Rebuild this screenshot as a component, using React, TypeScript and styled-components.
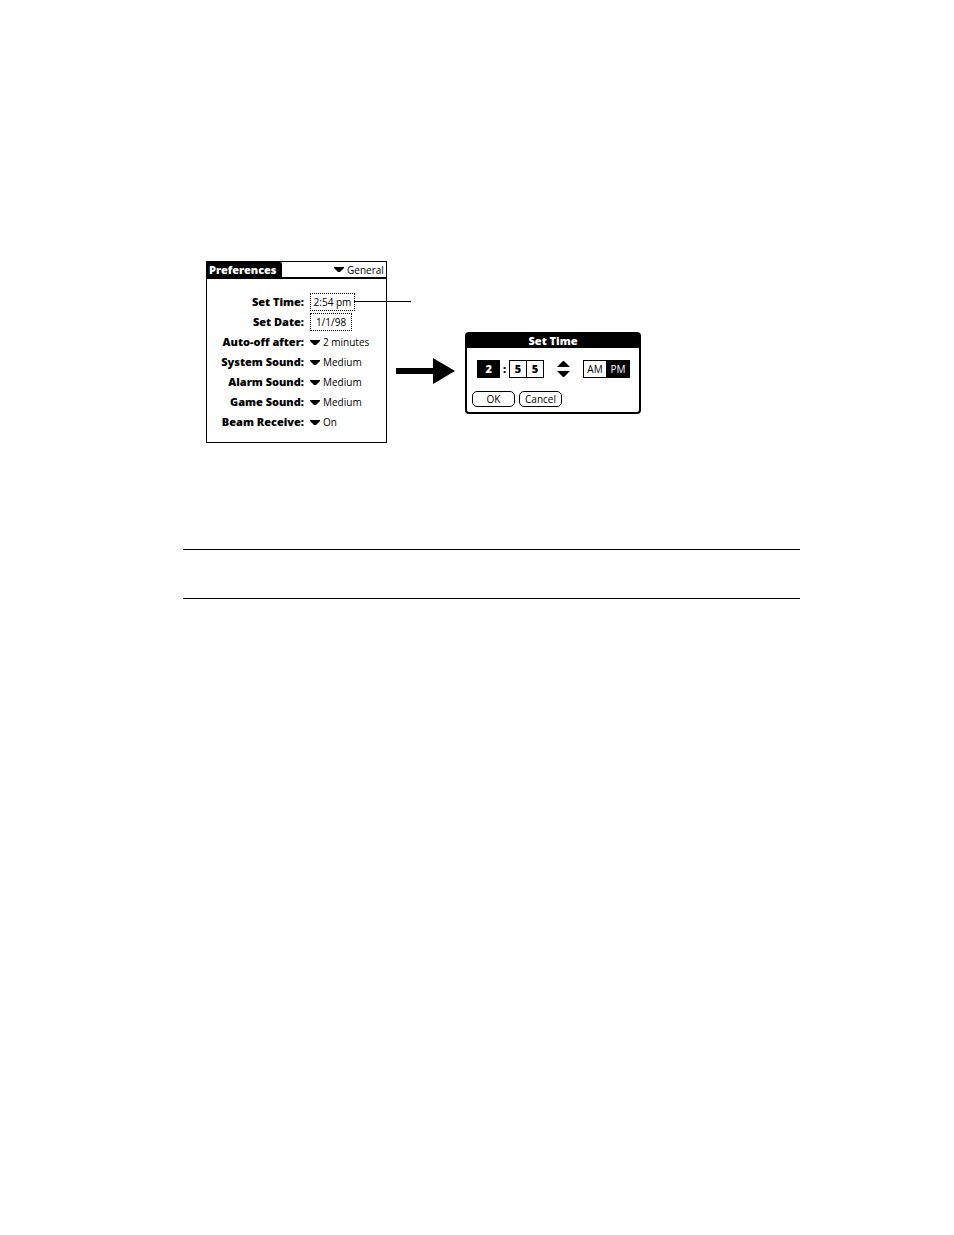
import React, { useState } from "react";
import styled, { createGlobalStyle, css } from "styled-components";

const GlobalStyle = createGlobalStyle`
  *, *::before, *::after { box-sizing: border-box; }
  body { margin: 0; background: #fff; color: #000; font-family: "Noto Sans", sans-serif; }
  button, select { margin: 0; padding: 0; font: inherit; color: inherit; background: none; border: 0; border-radius: 0; }
`;

const regularText = css`
  font: 400 10px/16px "Open Sans", sans-serif;
`;
const boldText = css`
  font: 900 11px/16px "Noto Sans", sans-serif;
`;

const Page = styled.main`
  padding: 261px 154px 0 183px;
`;
const Figure = styled.section`
  display: flex;
  align-items: flex-start;
  padding-left: 23px;
`;
const Panel = styled.form`
  display: flex;
  flex-direction: column;
  flex: none;
  width: 181px;
  min-height: 182px;
  border: 1px solid #000;
`;
const PanelHeader = styled.header`
  display: flex;
  justify-content: space-between;
  height: 17px;
  border-bottom: 2px solid #000;
`;
const PanelTitle = styled.h1`
  ${boldText}
  margin: 0;
  width: 75px;
  padding-left: 2px;
  background: #000;
  color: #fff;
  border-top-right-radius: 2px;
  white-space: nowrap;
`;
const Rows = styled.div`
  padding: 13px 0 8px;
`;
const Row = styled.div`
  display: grid;
  grid-template-columns: 97px 1fr;
  column-gap: 6px;
  align-items: center;
  height: 20px;
`;
const RowLabel = styled.label`
  ${boldText}
  text-align: right;
  white-space: nowrap;
`;
const Picker = styled.span`
  display: flex;
  align-items: center;
  gap: 3px;
`;
const PickerSelect = styled.select<{ $width: number }>`
  ${regularText}
  appearance: none;
  width: ${(p) => p.$width}px;
  height: 16px;
`;
const Trigger = styled.button<{ $width: number }>`
  ${regularText}
  position: relative;
  justify-self: start;
  width: ${(p) => p.$width}px;
  height: 18px;
  border: 1px dotted #000;
  white-space: nowrap;
`;
const Callout = styled.span`
  position: absolute;
  left: 100%;
  top: 7px;
  width: 57px;
  height: 1px;
  background: #000;
`;
const ArrowDrawing = styled.svg`
  flex: none;
  margin: 97px 10px 0 9px;
`;
const Dialog = styled.section`
  flex: none;
  width: 176px;
  margin-top: 71px;
  border: 2px solid #000;
  border-radius: 4px;
`;
const DialogTitle = styled.h2`
  ${boldText}
  margin: 0;
  height: 14px;
  line-height: 13px;
  background: #000;
  color: #fff;
  text-align: center;
`;
const TimeRow = styled.div`
  display: flex;
  align-items: center;
  padding: 12px 9px 0 10px;
`;
const Cell = styled.button<{ $on?: boolean; $bold?: boolean; $width: number }>`
  ${(p) => (p.$bold ? boldText : regularText)}
  width: ${(p) => p.$width}px;
  height: 18px;
  border: 1px solid #000;
  background: ${(p) => (p.$on ? "#000" : "#fff")};
  color: ${(p) => (p.$on ? "#fff" : "#000")};
`;
const Digits = styled.div`
  display: flex;
  ${Cell} + ${Cell} { margin-left: -1px; }
`;
const Colon = styled.span`
  ${boldText}
  width: 9px;
  text-align: center;
`;
const Spinner = styled.div`
  display: flex;
  flex-direction: column;
  gap: 4px;
  margin: 0 13px;
`;
const SpinButton = styled.button`
  display: block;
  width: 13px;
  height: 6px;
  line-height: 0;
`;
const Actions = styled.div`
  display: flex;
  gap: 4px;
  padding: 13px 5px 5px;
`;
const ActionButton = styled.button`
  ${regularText}
  width: 43px;
  height: 16px;
  line-height: 14px;
  border: 1px solid #000;
  border-radius: 5px;
`;
const Note = styled.section`
  height: 50px;
  margin-top: 106px;
  border: solid #000;
  border-width: 1px 0;
`;

const DownMark = () => (
  <svg width="10" height="5" viewBox="0 0 10 5" aria-hidden="true">
    <path d="M0 0h10v1L6 5H4L0 1z" />
  </svg>
);

const settings = [
  { id: "auto", label: "Auto-off after:", options: ["2 minutes", "1 minute", "3 minutes"] },
  { id: "system", label: "System Sound:", options: ["Medium", "Off", "Low", "High"] },
  { id: "alarm", label: "Alarm Sound:", options: ["Medium", "Off", "Low", "High"] },
  { id: "game", label: "Game Sound:", options: ["Medium", "Off", "Low", "High"] },
  { id: "beam", label: "Beam Receive:", options: ["On", "Off"] },
];

export default function App() {
  const [half, setHalf] = useState("PM");
  return (
    <>
      <GlobalStyle />
      <Page>
        <Figure>
          <Panel>
            <PanelHeader>
              <PanelTitle>Preferences</PanelTitle>
              <Picker>
                <DownMark />
                <PickerSelect $width={39} aria-label="Category">
                  <option>General</option>
                  <option>Buttons</option>
                </PickerSelect>
              </Picker>
            </PanelHeader>
            <Rows>
              <Row>
                <RowLabel htmlFor="time">Set Time:</RowLabel>
                <Trigger id="time" type="button" $width={45}>
                  2:54 pm
                  <Callout />
                </Trigger>
              </Row>
              <Row>
                <RowLabel htmlFor="date">Set Date:</RowLabel>
                <Trigger id="date" type="button" $width={42}>1/1/98</Trigger>
              </Row>
              {settings.map((s) => (
                <Row key={s.id}>
                  <RowLabel htmlFor={s.id}>{s.label}</RowLabel>
                  <Picker>
                    <DownMark />
                    <PickerSelect id={s.id} $width={60}>
                      {s.options.map((o) => (
                        <option key={o}>{o}</option>
                      ))}
                    </PickerSelect>
                  </Picker>
                </Row>
              ))}
            </Rows>
          </Panel>
          <ArrowDrawing width="59" height="26" viewBox="0 0 59 26" aria-hidden="true">
            <path d="M0 10h37V0l22 13-22 13V16H0z" />
          </ArrowDrawing>
          <Dialog role="dialog" aria-labelledby="set-time">
            <DialogTitle id="set-time">Set Time</DialogTitle>
            <TimeRow>
              <Cell type="button" $bold $on $width={24}>2</Cell>
              <Colon>:</Colon>
              <Digits>
                <Cell type="button" $bold $width={18}>5</Cell>
                <Cell type="button" $bold $width={18}>5</Cell>
              </Digits>
              <Spinner>
                <SpinButton type="button" aria-label="Increase">
                  <svg width="13" height="6" viewBox="0 0 13 6"><path d="M6 0h1l6 6H0z" /></svg>
                </SpinButton>
                <SpinButton type="button" aria-label="Decrease">
                  <svg width="13" height="6" viewBox="0 0 13 6"><path d="M0 0h13L7 6H6z" /></svg>
                </SpinButton>
              </Spinner>
              <Digits>
                {["AM", "PM"].map((h) => (
                  <Cell
                    key={h}
                    type="button"
                    $width={24}
                    $on={half === h}
                    aria-pressed={half === h}
                    onClick={() => setHalf(h)}
                  >
                    {h}
                  </Cell>
                ))}
              </Digits>
            </TimeRow>
            <Actions>
              <ActionButton type="button">OK</ActionButton>
              <ActionButton type="button">Cancel</ActionButton>
            </Actions>
          </Dialog>
        </Figure>
        <Note aria-label="Note" />
      </Page>
    </>
  );
}
